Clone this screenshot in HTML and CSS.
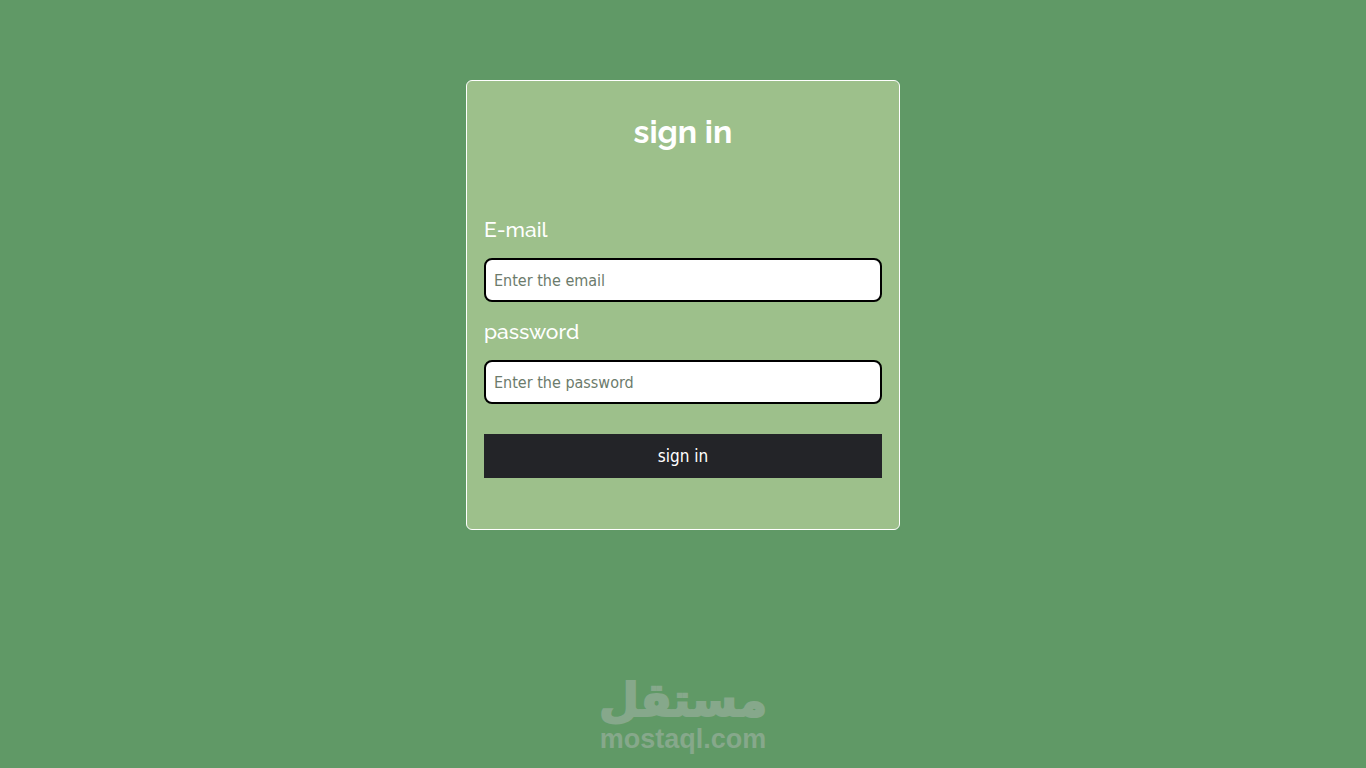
FILE: index.html
```html
<!DOCTYPE html>
<html lang="en">
<head>
  <meta charset="UTF-8">
  <meta name="viewport" content="width=device-width, initial-scale=1.0">
  <title>sign in</title>
  <link rel="stylesheet" href="styles.css">
</head>
<body>
  <main class="card">
    <h1 class="title">sign in</h1>
    <form class="form">
      <label class="label" for="email">E-mail</label>
      <input class="field" type="email" id="email" placeholder="Enter the email">
      <label class="label" for="password">password</label>
      <input class="field" type="password" id="password" placeholder="Enter the password">
      <button class="submit" type="submit">sign in</button>
    </form>
  </main>

  <footer class="brand">
    <span class="brand-name" lang="ar" dir="rtl">مستقل</span>
    <span class="brand-site">mostaql.com</span>
  </footer>
</body>
</html>
```

FILE: styles.css
```css
* {
  box-sizing: border-box;
}
body {
  margin: 0;
  min-height: 100vh;
  display: flex;
  flex-direction: column;
  align-items: center;
  background-color: #609966;
  font-family: Raleway, Lato, sans-serif;
}
.card {
  width: 100%;
  max-width: 434px;
  margin-top: 80px;
  padding: 32px 17px 51px;
  background-color: #9dc08b;
  border: 1px solid #fff;
  border-radius: 6px;
  color: #fff;
}
.title {
  margin: 0 0 65px;
  font-size: 32px;
  line-height: 38px;
  font-weight: bold;
  text-align: center;
}
.form {
  display: flex;
  flex-direction: column;
}
.label {
  margin-bottom: 14px;
  font-size: 21px;
  line-height: 28px;
  font-weight: 500;
}
.field {
  height: 44px;
  margin-bottom: 16px;
  padding: 8px;
  border: 2px solid #000;
  border-radius: 8px;
  background-color: #fff;
  font-family: Tahoma, "DejaVu Sans Condensed", sans-serif;
  font-size: 16px;
}
.field::placeholder {
  color: #6c7b6c;
}
.submit {
  height: 44px;
  margin-top: 14px;
  border: none;
  background-color: #232428;
  color: #fff;
  font-family: Tahoma, "DejaVu Sans Condensed", sans-serif;
  font-size: 17px;
  cursor: pointer;
}
.brand {
  margin-top: auto;
  padding-bottom: 14px;
  display: flex;
  flex-direction: column;
  align-items: center;
  color: #86a88b;
}
.brand-name {
  font-family: "DejaVu Sans", sans-serif;
  font-size: 46px;
  line-height: 48px;
  font-weight: bold;
  -webkit-text-stroke: 2px #86a88b;
}
.brand-site {
  font-family: "Liberation Sans", Arial, sans-serif;
  font-size: 27px;
  line-height: 30px;
  font-weight: bold;
}
```
